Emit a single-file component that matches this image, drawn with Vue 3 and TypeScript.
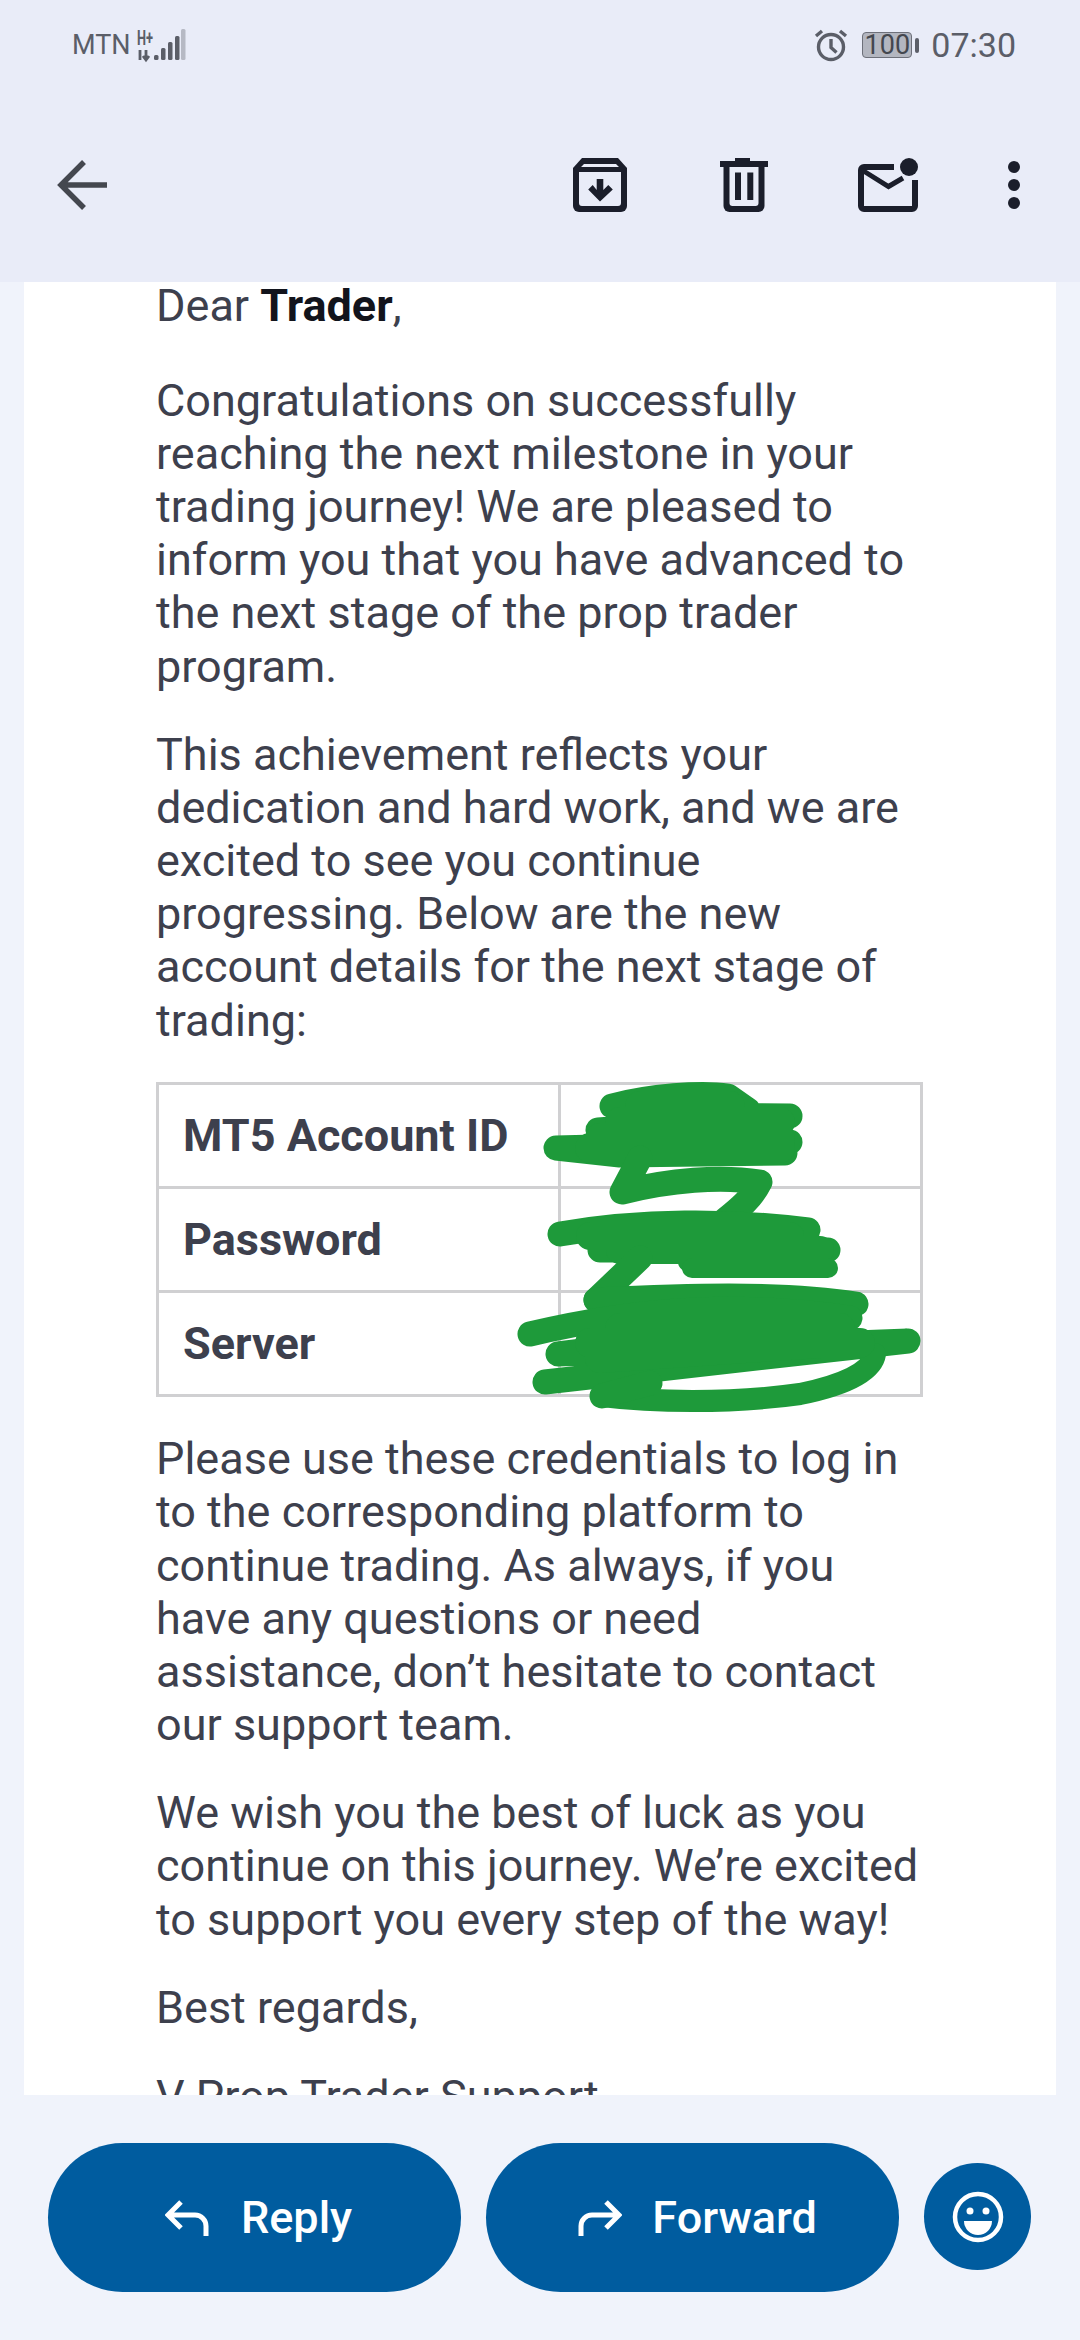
<script setup lang="ts">
const rows = ['MT5 Account ID', 'Password', 'Server']
const bars = [
  { x: 155, h: 5 },
  { x: 162, h: 12 },
  { x: 169, h: 18 },
  { x: 176, h: 24 },
]
</script>

<template>
  <div class="screen">
    <header class="top">
      <div class="status">
        <div class="status__left">
          <span class="carrier">MTN</span>
          <svg class="signal" width="60" height="36" viewBox="136 27 60 36">
            <text x="138" y="45" class="signal__h" textLength="16" lengthAdjust="spacingAndGlyphs">H+</text>
            <path d="M141 50v10M147 50v10M144 56l3 4 3-4" stroke="#5b5e68" stroke-width="2.8" fill="none" />
            <rect v-for="b in bars" :key="b.x" :x="b.x" :y="60 - b.h" width="4.5" :height="b.h" rx="1.5" fill="#5b5e68" />
            <rect x="182" y="29" width="4.5" height="31" rx="1.5" fill="#b6b9c4" />
          </svg>
        </div>
        <div class="status__right">
          <svg width="36" height="34" viewBox="0 0 36 34" fill="none" stroke="#5b5e68" stroke-width="3.4">
            <circle cx="18" cy="19" r="12.5" />
            <path d="M18 11v8.5l5.5 5M3 8l6-5M33 8l-6-5" />
          </svg>
          <div class="battery">
            <div class="battery__cell"><span>100</span></div>
            <i class="battery__nub" />
          </div>
          <span class="clock">07:30</span>
        </div>
      </div>
      <div class="toolbar">
        <svg class="back" width="52" height="50" viewBox="0 0 52 50" fill="none" stroke="#44474f" stroke-width="5.5">
          <path d="M27 2 4 25l23 23M4 25h46" />
        </svg>
        <div class="actions">
          <svg class="archive" width="54" height="54" viewBox="0 0 54 54">
            <path d="M9 0h36l9 10v38a6 6 0 0 1-6 6H6a6 6 0 0 1-6-6V10z" fill="#1b1e2b" />
            <path d="M11 6h32l3 3H8zM6 14h42v31a3 3 0 0 1-3 3H9a3 3 0 0 1-3-3z" fill="#e9ecf8" />
            <path d="M23.700 21h6.600v11l5-5 4.500 4.500L27 43.500 15.200 31.500l4.500-4.500 4 5z" fill="#1b1e2b" />
          </svg>
          <svg width="48" height="54" viewBox="0 0 48 54">
            <path d="M0 3h15V0h15v3h18v6H0z" fill="#1b1e2b" />
            <path d="M3.500 9h41v39a6 6 0 0 1-6 6h-29a6 6 0 0 1-6-6z" fill="#1b1e2b" />
            <path d="M9.500 9h29v36a3 3 0 0 1-3 3h-23a3 3 0 0 1-3-3z" fill="#e9ecf8" />
            <path d="M15 14.500h6V42h-6zM27.300 14.500h6V42h-6z" fill="#1b1e2b" />
          </svg>
          <svg width="60" height="54" viewBox="0 0 60 54">
            <g fill="none" stroke="#1b1e2b" stroke-width="6">
              <path d="M36 9H6a3 3 0 0 0-3 3v36a3 3 0 0 0 3 3h48a3 3 0 0 0 3-3V22" />
              <path d="M4 12l26.500 16.500L45 20" stroke-width="5" />
            </g>
            <circle cx="51" cy="9" r="9" fill="#1b1e2b" />
          </svg>
          <svg width="12" height="48" viewBox="0 0 12 48" fill="#1b1e2b">
            <circle cx="6" cy="6" r="6" />
            <circle cx="6" cy="24" r="6" />
            <circle cx="6" cy="42" r="6" />
          </svg>
        </div>
      </div>
    </header>

    <main class="mail">
      <div class="mail__body">
        <p class="greeting">Dear <b>Trader</b>,</p>
        <p>Congratulations on successfully reaching the next milestone in your trading journey! We are pleased to inform you that you have advanced to the next stage of the prop trader program.</p>
        <p>This achievement reflects your dedication and hard work, and we are excited to see you continue progressing. Below are the new account details for the next stage of trading:</p>
        <div class="creds">
          <table>
            <tr v-for="r in rows" :key="r">
              <th>{{ r }}</th>
              <td></td>
            </tr>
          </table>
          <!-- hand scribble covering the values -->
          <svg class="scribble" width="960" height="340" viewBox="0 1080 960 340" fill="none" stroke="#1e9a3a" stroke-width="25" stroke-linecap="round" stroke-linejoin="round">
            <path d="M612 1108C650 1098 700 1094 728 1098L748 1112 620 1116 790 1118 598 1132 790 1144 556 1150 620 1157 785 1155" />
            <path d="M640 1108H730M620 1124H780M600 1140H780M590 1150H780" stroke-width="30" />
            <path d="M640 1160 622 1194C670 1182 720 1178 760 1184 752 1200 740 1210 725 1222" />
            <path d="M560 1236C640 1222 730 1222 808 1232L600 1252 828 1252 690 1262" />
            <path d="M590 1238H790M620 1252H820" stroke-width="28" />
            <path d="M692 1270H828" stroke-width="20" />
            <path d="M596 1302 640 1260" />
            <path d="M596 1302C680 1298 780 1294 856 1306" />
            <path d="M530 1336C640 1310 740 1304 850 1320L558 1356 908 1343 545 1384 864 1348" />
            <path d="M602 1398C650 1404 730 1406 800 1396 840 1388 872 1375 875 1356" stroke-width="22" />
            <path d="M602 1398 650 1385" />
            <path d="M620 1330H840M590 1345H860M600 1360 820 1345" stroke-width="30" />
          </svg>
        </div>
        <p>Please use these credentials to log in to the corresponding platform to continue trading. As always, if you have any questions or need assistance, don’t hesitate to contact our support team.</p>
        <p>We wish you the best of luck as you continue on this journey. We’re excited to support you every step of the way!</p>
        <p>Best regards,</p>
        <p>V Prop Trader Support</p>
      </div>
    </main>

    <footer class="bottom">
      <button class="pill">
        <svg width="46" height="36" viewBox="0 0 46 36" fill="none" stroke="#fff" stroke-width="5">
          <path d="M16 2 3 15l13 13M3 15h27a11 11 0 0 1 11 11v10" />
        </svg>
        Reply
      </button>
      <button class="pill">
        <svg width="46" height="36" viewBox="0 0 46 36" fill="none" stroke="#fff" stroke-width="5">
          <path d="M30 2l13 13-13 13M43 15H16A11 11 0 0 0 5 26v10" />
        </svg>
        Forward
      </button>
      <button class="emoji">
        <svg width="52" height="52" viewBox="0 0 52 52">
          <circle cx="26" cy="26" r="23" fill="none" stroke="#fff" stroke-width="4.500" />
          <circle cx="18" cy="20" r="3.500" fill="#fff" />
          <circle cx="34" cy="20" r="3.500" fill="#fff" />
          <path d="M12 30h28a14 14 0 0 1-28 0z" fill="#fff" />
        </svg>
      </button>
    </footer>
  </div>
</template>

<style scoped>
.screen {
  width: 1080px;
  height: 2340px;
  display: flex;
  flex-direction: column;
  background: #f0f3fb;
  font-family: Roboto, "Noto Sans", sans-serif;
  overflow: hidden;
}

/* the header sits over the scrolled mail, so it hides the top of the card */
.top {
  position: relative;
  z-index: 1;
  height: 282px;
  flex: none;
  background: #e9ecf8;
}

.status {
  height: 90px;
  display: flex;
  justify-content: space-between;
  align-items: center;
  padding: 0 64px 0 72px;
  color: #5b5e68;
}

.status__left,
.status__right {
  display: flex;
  align-items: center;
}

.carrier {
  font-size: 27px;
}

.signal {
  margin-left: 4px;
}

.signal__h {
  font-size: 20px;
  font-weight: 700;
  fill: #5b5e68;
}

.battery {
  display: flex;
  align-items: center;
  margin-left: 13px;
}

.battery__cell {
  width: 50px;
  height: 26px;
  border: 1.5px solid #6d707a;
  border-radius: 4px;
  box-sizing: border-box;
  background: #b3b6c0;
  display: flex;
  align-items: center;
  justify-content: center;
  font-size: 27px;
  line-height: 23px;
  color: #44474f;
}

.battery__nub {
  width: 4px;
  height: 15px;
  margin-left: 3px;
  background: #5b5e68;
  border-radius: 2px;
}

.clock {
  font-size: 34px;
  margin-left: 12px;
}

.toolbar {
  height: 190px;
  display: flex;
  align-items: center;
  justify-content: space-between;
  padding: 0 60px 0 57px;
}

.actions {
  display: flex;
  align-items: center;
  gap: 90px;
}

.archive {
  margin-right: 3px;
}

.mail {
  flex: 1;
  min-height: 0;
  margin: -8px 24px 0;
  background: #fff;
  overflow: hidden;
}

.mail__body {
  padding: 5px 133px 0 132px;
  font-size: 45px;
  line-height: 53.1px;
  color: #3d404d;
}

.mail__body p {
  margin: 0 0 35.4px;
}

.mail__body .greeting {
  margin-bottom: 42px;
}

.mail__body b {
  font-weight: 700;
  color: #12141c;
}

.creds {
  position: relative;
  margin-bottom: 35.4px;
}

.creds table {
  width: 767px;
  border-collapse: collapse;
  table-layout: fixed;
  border: 3px solid #d0d0d2;
}

.creds tr {
  height: 104px;
}

.creds th,
.creds td {
  border: 3px solid #d0d0d2;
  padding: 0 24px;
  text-align: left;
}

.creds th {
  width: 351px;
  font-weight: 700;
  white-space: nowrap;
}

.scribble {
  position: absolute;
  top: 0;
  left: -156px;
  margin-top: -4px;
}

.bottom {
  height: 245px;
  flex: none;
  padding: 48px 49px 0 48px;
  box-sizing: border-box;
  display: flex;
  align-items: flex-start;
  gap: 25px;
}

.pill {
  width: 414px;
  height: 149px;
  border: 0;
  padding: 0 0 0 8px;
  border-radius: 75px;
  background: #005c9f;
  color: #fff;
  font-family: inherit;
  font-size: 45px;
  font-weight: 500;
  display: flex;
  align-items: center;
  justify-content: center;
  gap: 30px;
}

.emoji {
  width: 107px;
  height: 107px;
  margin-top: 20px;
  border: 0;
  padding: 0;
  border-radius: 50%;
  background: #005c9f;
  display: flex;
  align-items: center;
  justify-content: center;
}
</style>
